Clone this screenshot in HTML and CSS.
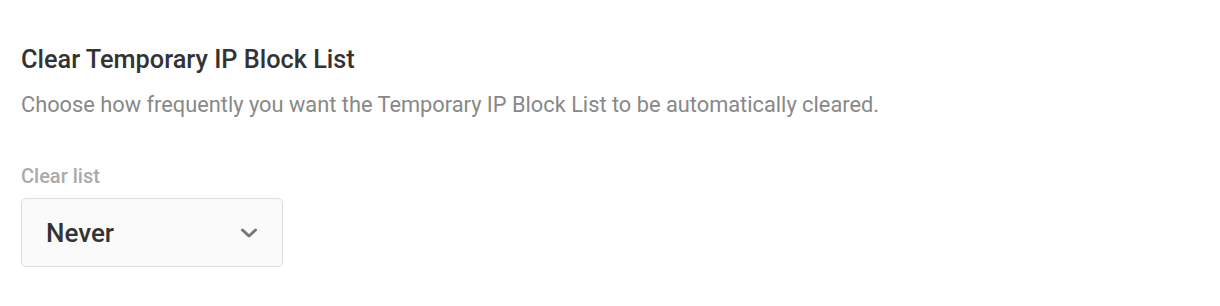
FILE: index.html
```html
<!DOCTYPE html>
<html lang="en">
<head>
  <meta charset="UTF-8">
  <title>Clear Temporary IP Block List</title>
  <link rel="stylesheet" href="styles.css">
</head>
<body>
  <div class="setting">
    <h2 class="setting-title">Clear Temporary IP Block List</h2>
    <p class="setting-desc">Choose how frequently you want the Temporary IP Block List to be automatically cleared.</p>

    <div class="field">
      <label class="field-label" for="clearList">Clear list</label>
      <div class="select">
        <span class="select-value" id="clearList">Never</span>
        <svg class="select-arrow" width="18" height="12" viewBox="0 0 18 12">
          <path d="M2.5 3 L9 9 L15.5 3" fill="none" stroke="#777" stroke-width="3" stroke-linecap="round" stroke-linejoin="round"/>
        </svg>
      </div>
    </div>
  </div>
</body>
</html>
```

FILE: styles.css
```css
body {
  margin: 0;
  font-family: Roboto, "Liberation Sans", sans-serif;
  background: #fff;
  color: #333;
}
.setting {
  padding: 45px 21px 0;
}
.setting-title {
  margin: 0;
  font-size: 25.3px;
  font-weight: 500;
  line-height: 30px;
  color: #333;
}
.setting-desc {
  margin: 16px 0 0;
  font-size: 21.8px;
  line-height: 28px;
  color: #888;
}
.field {
  margin-top: 45px;
}
.field-label {
  display: block;
  font-size: 20px;
  font-weight: 500;
  line-height: 24px;
  color: #aaa;
  margin-bottom: 10px;
}
.select {
  box-sizing: border-box;
  width: 262px;
  height: 69px;
  display: flex;
  align-items: center;
  justify-content: space-between;
  padding: 0 24px;
  background: #fafafa;
  border: 1px solid #ddd;
  border-radius: 5px;
}
.select-value {
  font-size: 26px;
  font-weight: 500;
  color: #333;
}
```
